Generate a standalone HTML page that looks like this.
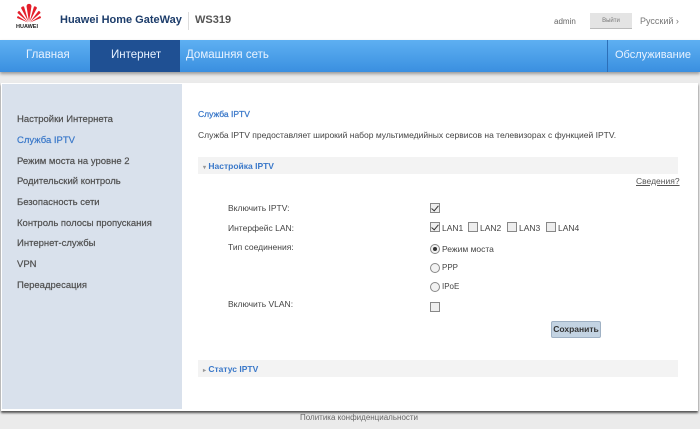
<!DOCTYPE html>
<html><head><meta charset="utf-8"><style>
*{margin:0;padding:0;box-sizing:border-box}
body{width:700px;height:429px;background:#ebebeb;font-family:"Liberation Sans",Arial,sans-serif;position:relative;overflow:hidden}
.a{position:absolute;white-space:nowrap}
.hdr{left:0;top:0;width:700px;height:40px;background:#fff}
.nav{left:0;top:40px;width:700px;height:32px;background:linear-gradient(#5eb0f2,#3a8fe0);box-shadow:0 2px 3px rgba(0,0,0,.35)}
.nav span{position:absolute;top:9px;font-size:11.5px;color:#e8f2ff}
.side{left:2px;top:84px;width:180px;height:325px;background:#d9e1ec}
.main{left:182px;top:84px;width:515px;height:325px;background:#fff}
.frame{left:1px;top:83px;width:697px;height:328px;box-shadow:0 2px 2px #555;background:#fff}
.sl{font-size:9.5px;color:#505050;left:17px;-webkit-text-stroke:.2px #505050}
.t{font-size:8.5px;color:#444}
.cb{width:10px;height:10px;border:1px solid #888;background:#eee;position:absolute}
.cb.on::after{content:"";position:absolute;left:2px;top:0px;width:3px;height:6px;border:solid #333;border-width:0 1.5px 1.5px 0;transform:rotate(40deg)}
.rd{width:10px;height:10px;border:1px solid #888;border-radius:50%;background:#f2f2f2;position:absolute}
.rd.on::after{content:"";position:absolute;left:2px;top:2px;width:4px;height:4px;border-radius:50%;background:#333}
</style></head><body>
<div class="a hdr"></div>
<svg class="a" style="left:16px;top:3px" width="26" height="20" viewBox="0 0 26 20">
<g fill="#e41f2b">
<path d="M13 19 L10.5 3 Q11.5 0.5 13 1 Z"/><path d="M13 19 L15.5 3 Q14.5 0.5 13 1 Z"/>
<path d="M12.5 19 L5 5 Q6 3 8 3.5 Z"/><path d="M13.5 19 L21 5 Q20 3 18 3.5 Z"/>
<path d="M12 19 L1.5 10 Q1.8 8 3.5 8 Z"/><path d="M14 19 L24.5 10 Q24.2 8 22.5 8 Z"/>
<path d="M12 19.5 L1 15 Q1 13.5 2 13 Z"/><path d="M14 19.5 L25 15 Q25 13.5 24 13 Z"/>
</g></svg>
<div class="a" style="left:16px;top:24px;font-size:5.5px;font-weight:bold;color:#222">HUAWEI</div>
<div class="a" style="left:60px;top:14px;font-size:11px;font-weight:bold;color:#1d3d6b">Huawei Home GateWay</div>
<div class="a" style="left:188px;top:12px;width:1px;height:18px;background:#ddd"></div>
<div class="a" style="left:195px;top:14px;font-size:11px;font-weight:bold;color:#555">WS319</div>
<div class="a" style="left:554px;top:17px;font-size:8px;color:#666">admin</div>
<div class="a" style="left:590px;top:13px;width:42px;height:16px;background:#e4e4e4;border-bottom:1px solid #bbb;font-size:6px;color:#777;text-align:center;line-height:16px">Выйти</div>
<div class="a" style="left:640px;top:16px;font-size:9px;color:#777">Русский ›</div>
<div class="a nav">
<div style="position:absolute;left:90px;top:0;width:90px;height:32px;background:#1f5093"></div>
<div style="position:absolute;left:607px;top:0;width:1px;height:32px;background:#2d6fb8"></div>
<span style="left:26px">Главная</span><span style="left:111px">Интернет</span><span style="left:186px">Домашняя сеть</span><span style="left:615px;font-size:11px">Обслуживание</span>
</div>
<div class="a frame"></div>
<div class="a side"></div>
<div class="a main"></div>
<div class="a sl" style="top:114px">Настройки Интернета</div>
<div class="a sl" style="top:135px;color:#3a78c9;-webkit-text-stroke:.2px #3a78c9">Служба IPTV</div>
<div class="a sl" style="top:156px">Режим моста на уровне 2</div>
<div class="a sl" style="top:176px">Родительский контроль</div>
<div class="a sl" style="top:197px">Безопасность сети</div>
<div class="a sl" style="top:218px">Контроль полосы пропускания</div>
<div class="a sl" style="top:238px">Интернет-службы</div>
<div class="a sl" style="top:259px">VPN</div>
<div class="a sl" style="top:280px">Переадресация</div>

<div class="a" style="left:198px;top:109px;font-size:8.5px;color:#3a78c9;-webkit-text-stroke:.25px #3a78c9">Служба IPTV</div>
<div class="a t" style="left:198px;top:130px">Служба IPTV предоставляет широкий набор мультимедийных сервисов на телевизорах с функцией IPTV.</div>
<div class="a" style="left:198px;top:157px;width:480px;height:17px;background:#f3f3f3"></div>
<div class="a" style="left:203px;top:161px;font-size:8.5px;font-weight:bold;color:#3a78c9"><span style="font-size:6px;color:#999">▾</span> Настройка IPTV</div>
<div class="a t" style="left:636px;top:176px;text-decoration:underline;color:#555">Сведения?</div>
<div class="a t" style="left:228px;top:203px">Включить IPTV:</div>
<div class="cb on" style="left:430px;top:203px"></div>
<div class="a t" style="left:228px;top:223px">Интерфейс LAN:</div>
<div class="cb on" style="left:430px;top:222px"></div><div class="a t" style="left:442px;top:223px">LAN1</div>
<div class="cb" style="left:468px;top:222px"></div><div class="a t" style="left:480px;top:223px">LAN2</div>
<div class="cb" style="left:507px;top:222px"></div><div class="a t" style="left:519px;top:223px">LAN3</div>
<div class="cb" style="left:546px;top:222px"></div><div class="a t" style="left:558px;top:223px">LAN4</div>
<div class="a t" style="left:228px;top:242px">Тип соединения:</div>
<div class="rd on" style="left:430px;top:244px"></div><div class="a t" style="left:442px;top:244px">Режим моста</div>
<div class="rd" style="left:430px;top:263px"></div><div class="a t" style="left:442px;top:263px;font-size:8px">PPP</div>
<div class="rd" style="left:430px;top:282px"></div><div class="a t" style="left:442px;top:282px;font-size:8px">IPoE</div>
<div class="a t" style="left:228px;top:299px">Включить VLAN:</div>
<div class="cb" style="left:430px;top:302px"></div>
<div class="a" style="left:551px;top:321px;width:50px;height:17px;background:#c3d3e2;border:1px solid #9fb1c4;border-radius:2px;font-size:8.5px;font-weight:bold;color:#333;text-align:center;line-height:15px">Сохранить</div>
<div class="a" style="left:198px;top:360px;width:480px;height:17px;background:#f3f3f3"></div>
<div class="a" style="left:203px;top:364px;font-size:8.5px;font-weight:bold;color:#3a78c9"><span style="font-size:6px;color:#999">▸</span> Статус IPTV</div>
<div class="a" style="left:300px;top:413px;font-size:8px;color:#666">Политика конфиденциальности</div>
</body></html>
